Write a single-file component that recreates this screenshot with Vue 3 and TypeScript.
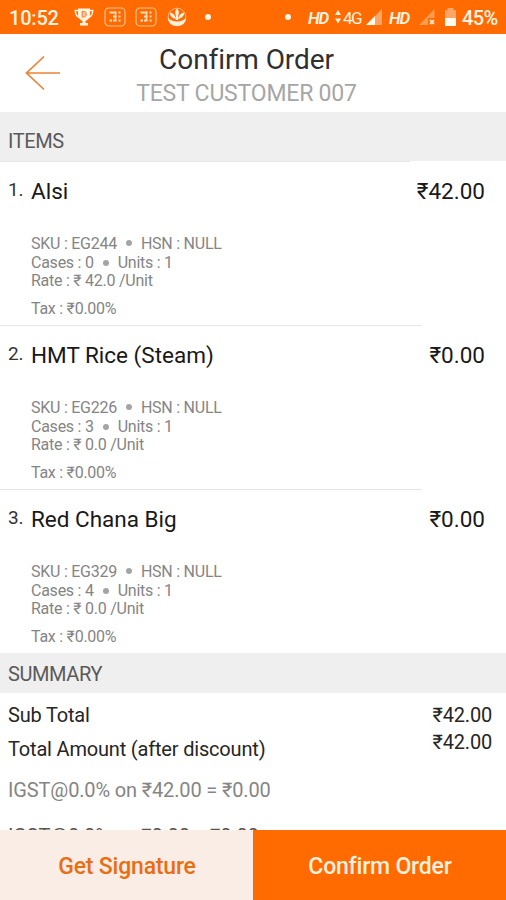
<script setup lang="ts">
interface Item {
  name: string
  price: string
  sku: string
  cases: number
  rate: string
}

const items: Item[] = [
  { name: 'Alsi', price: '42.00', sku: 'EG244', cases: 0, rate: '42.0' },
  { name: 'HMT Rice (Steam)', price: '0.00', sku: 'EG226', cases: 3, rate: '0.0' },
  { name: 'Red Chana Big', price: '0.00', sku: 'EG329', cases: 4, rate: '0.0' },
]
const taxes: string[] = ['IGST@0.0% on ₹42.00 = ₹0.00', 'IGST@0.0% on ₹0.00 = ₹0.00']
</script>

<template>
  <div class="screen">
    <div class="status">
      <span class="time">10:52</span>
      <svg class="trophy" width="20" height="20" viewBox="0 0 20 20">
        <path d="M4 1.500H16V8Q15.500 12 11.500 14V16H14V18.500H6V16H8.500V14Q4.500 12 4 8Z" fill="#fff3e0" />
        <path d="M5 3.500H1.300Q1.300 9 6 11M15 3.500H18.700Q18.700 9 14 11" fill="none" stroke="#fff3e0" stroke-width="1.500" />
        <path d="M8.200 4.500H10.300Q12.300 5 12.300 7.200T10.300 10H8.200Z" fill="#f7c8a0" stroke="#ee8a48" stroke-width="1.200" />
      </svg>
      <svg v-for="n in 2" :key="n" class="grid-icon" width="22" height="20" viewBox="0 0 22 20">
        <rect x="1" y="1" width="20" height="18" rx="4" fill="none" stroke="#ffc28e" stroke-width="1.200" />
        <path d="M5.500 5.500H12.500M14.500 5.500H16.500M9 9.500H12.500M14.500 9.500H16.500M5.500 13.500H8M9 13.500H12.500M14.500 13.500H16.500" stroke="#ffe0c0" stroke-width="2" />
        <path d="M11.500 5V14" stroke="#ffdcb8" stroke-width="1.500" />
      </svg>
      <svg class="lotus" width="20" height="20" viewBox="0 0 20 20">
        <circle cx="10" cy="10" r="8.800" fill="none" stroke="#ffb27a" stroke-width="1" />
        <path d="M10 1.500Q13 4.500 11.200 8.500V13H8.800V8.500Q7 4.500 10 1.500ZM2.500 5.500Q7.500 5.500 9 12Q3.500 11 2.500 5.500ZM17.500 5.500Q12.500 5.500 11 12Q16.500 11 17.500 5.500Z" fill="#fff0dc" />
        <path d="M.7 10.500Q4 14.500 10 14.500T19.300 10.500Q18.500 19 10 19T.7 10.500Z" fill="#fff0dc" />
      </svg>
      <i class="dot"></i>
      <i class="dot right-dot"></i>
      <span class="hd">HD</span>
      <svg class="updown" width="6" height="14" viewBox="0 0 6 14">
        <path d="M3 0L6 5H0ZM0 8.500H6L3 13.500Z" fill="#fff3e0" />
      </svg>
      <span class="net">4G</span>
      <svg class="signal" width="16" height="16" viewBox="0 0 16 16">
        <path d="M16 0V16H0Z" fill="#ffa667" />
        <path d="M9 7V16H0Z" fill="#fffaf0" />
      </svg>
      <span class="hd hd2">HD</span>
      <svg class="signal2" width="16" height="16" viewBox="0 0 16 16">
        <path d="M15.500 0V9H9V16H0Z" fill="#ff9c50" />
        <path d="M11 11L15 15M15 11L11 15" stroke="#ffe2c4" stroke-width="1.800" />
      </svg>
      <svg class="battery" width="11" height="18" viewBox="0 0 11 18">
        <path d="M2.500 0H8.500V2H11V18H0V2H2.500Z" fill="#ffa667" />
        <path d="M0 10H11V18H0Z" fill="#fffaf0" />
      </svg>
      <span class="pct">45%</span>
    </div>

    <header class="header">
      <svg class="back" width="36" height="36" viewBox="0 0 36 36">
        <path d="M35 18H1.500M19 1.500L1.500 18L19 34.500" fill="none" stroke="#ee8135" stroke-width="1.700" />
      </svg>
      <div class="titles">
        <h1><span>Confirm Order</span></h1>
        <p><span>TEST CUSTOMER 007</span></p>
      </div>
    </header>

    <h2 class="section items-head"><span>ITEMS</span></h2>
    <div class="items">
      <section v-for="(item, i) in items" :key="item.sku" class="item">
        <span class="index">{{ i + 1 }}.</span>
        <div class="body">
          <h3><span>{{ item.name }}</span></h3>
          <div class="details">
            <p><span>SKU : {{ item.sku }}</span><i class="bullet high"></i><span>HSN : NULL</span></p>
            <p><span class="cases">Cases : {{ item.cases }}</span><i class="bullet"></i><span>Units : 1</span></p>
            <p><span>Rate : ₹ {{ item.rate }} /Unit</span></p>
            <p class="tax"><span>Tax : ₹0.00%</span></p>
          </div>
        </div>
        <span class="price">₹{{ item.price }}</span>
      </section>
    </div>

    <h2 class="section summary-head"><span>SUMMARY</span></h2>
    <div class="summary">
      <div class="totals">
        <div class="labels"><span class="sub">Sub Total</span><span class="total">Total Amount (after discount)</span></div>
        <div class="amounts"><span>₹42.00</span><span>₹42.00</span></div>
      </div>
      <p v-for="t in taxes" :key="t" class="igst">{{ t }}</p>
    </div>

    <footer class="actions">
      <button class="sign"><span>Get Signature</span></button>
      <button class="confirm"><span>Confirm Order</span></button>
    </footer>
  </div>
</template>

<style>
body { margin: 0; }
</style>

<style scoped>
* { box-sizing: border-box; margin: 0; }
.screen { width: 506px; height: 900px; overflow: hidden; display: flex; flex-direction: column; background: #fff; font-family: Roboto, sans-serif; color: #191919; }
.status { height: 34px; flex: none; display: flex; align-items: center; background: #ff6b01; color: #fff3e2; white-space: nowrap; }
.status svg, .status span, .dot { flex: none; }
.time { width: 65px; padding-left: 9px; font-size: 20px; font-weight: 500; line-height: 34px; padding-top: 2px; letter-spacing: -0.2px; }
.trophy { margin-left: 9px; }
.grid-icon { margin-left: 10px; margin-right: -1px; }
.lotus { margin-left: 11px; }
.dot { width: 6px; height: 6px; border-radius: 50%; background: #fff6e7; margin-left: 18px; }
.right-dot { margin-left: 74px; }
.hd { margin-left: 17px; width: 24px; padding-top: 1px; font-size: 17px; font-style: italic; font-weight: 600; letter-spacing: -1.2px; }
.updown { margin-left: 3px; }
.net { width: 20px; margin-left: 2px; padding-top: 1px; font-size: 17px; letter-spacing: -1.6px; }
.signal { margin-left: 3px; }
.hd2 { margin-left: 7px; }
.signal2 { margin-left: 6px; }
.battery { margin-left: 10px; }
.pct { margin-left: 6px; padding-top: 2px; font-size: 20px; font-weight: 500; letter-spacing: -0.6px; }
.header { height: 78px; flex: none; display: flex; background: #fff; }
.back { margin: 21px 0 0 25px; flex: none; }
.titles { width: 371px; text-align: center; }
h1 { margin-top: 8px; font-size: 28px; line-height: 36px; font-weight: 400; letter-spacing: -0.08px; color: #303030; }
.titles p { margin-top: 1px; font-size: 23px; line-height: 30px; letter-spacing: -0.2px; color: #a6a6a6; }
.section { flex: none; background: #efefef; padding-left: 8px; font-size: 20px; font-weight: 400; letter-spacing: -0.4px; color: #5a5a5a; }
.items-head { height: 49px; line-height: 59px; }
.summary-head { height: 40px; line-height: 43px; }
.items { height: 492px; flex: none; }
.item { height: 164px; display: flex; padding: 0 21px 0 8px; background: linear-gradient(#e6e6e6, #e6e6e6) 0 0 / 422px 1px no-repeat; }
.item:first-child { background-size: 410px 1px; }
.index { width: 23px; font-size: 19px; line-height: 58px; letter-spacing: -0.3px; color: #333; }
.body { flex: 1; }
h3 { font-size: 22.5px; line-height: 61px; font-weight: 400; }
.details { margin-top: 13px; font-size: 16px; line-height: 18.5px; letter-spacing: -0.25px; color: #858585; }
.details p { display: flex; align-items: center; }
.bullet { width: 6px; height: 6px; border-radius: 50%; background: #a4a4a4; margin: 0 9px; }
.high { transform: translateY(-1px); }
.details .tax { margin-top: 9px; }
.price { font-size: 22.5px; line-height: 61px; }
.summary { flex: 1; min-height: 0; overflow: hidden; padding: 5px 14px 0 8px; font-size: 20px; letter-spacing: -0.18px; color: #262626; }
.totals { display: flex; justify-content: space-between; height: 75px; }
.labels, .amounts { display: flex; flex-direction: column; }
.labels { line-height: 34px; }
.amounts { line-height: 27px; padding-top: 4px; }
.igst { height: 46px; line-height: 34px; letter-spacing: -0.14px; color: #858585; }
.igst:last-child { color: #555; letter-spacing: -0.18px; }
.actions { height: 70px; flex: none; display: flex; }
button { flex: 1; border: 0; padding: 2px 0 0; font: 500 23px Roboto, sans-serif; letter-spacing: -0.2px; }
.sign { background: #f9ede5; color: #e96e13; padding-left: 1px; }
.confirm { background: #ff6b01; color: #fff0df; padding-left: 1px; }
</style>
